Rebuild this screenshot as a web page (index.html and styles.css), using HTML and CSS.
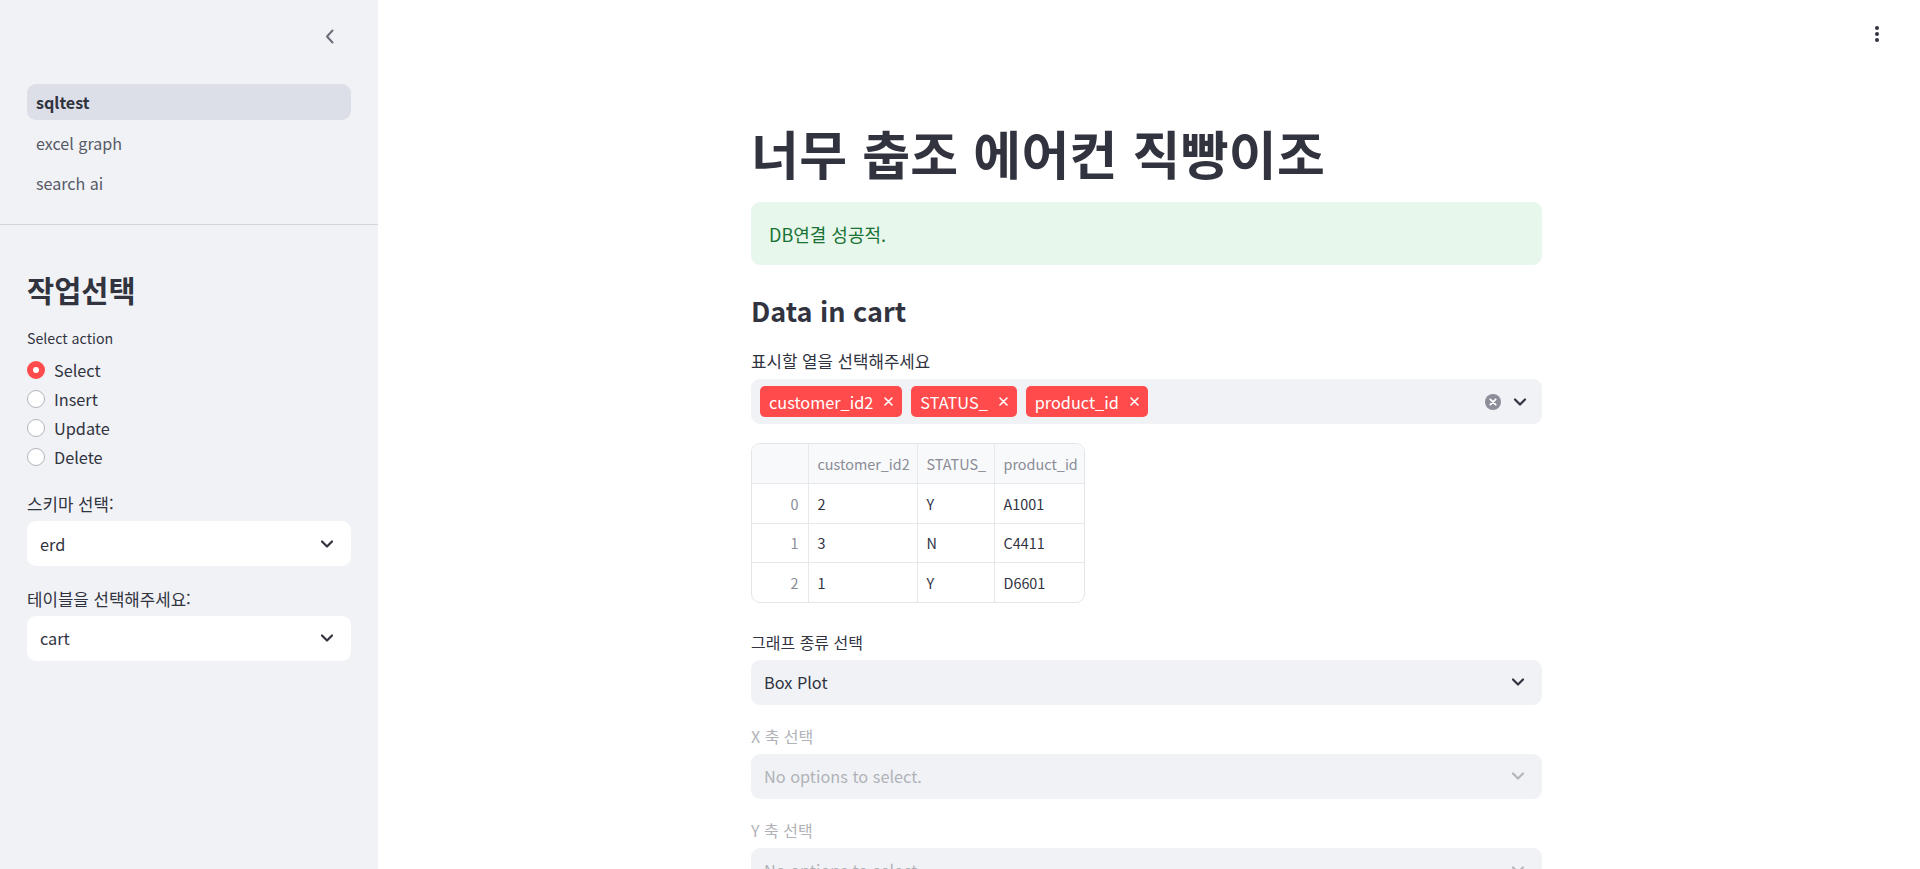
FILE: index.html
```html
<!DOCTYPE html>
<html lang="ko">
<head>
<meta charset="utf-8">
<title>sqltest</title>
<link rel="stylesheet" href="styles.css">
</head>
<body>
<div class="app">
  <aside class="sidebar">
    <div class="sb-top">
      <button class="collapse" aria-label="collapse">
        <svg width="10" height="15" viewBox="0 0 10 15"><path d="M7.5 1.5 L2 7.5 L7.5 13.5" fill="none" stroke="#6b6e79" stroke-width="2" stroke-linecap="round" stroke-linejoin="round"/></svg>
      </button>
    </div>
    <nav class="nav">
      <a class="nav-item active">sqltest</a>
      <a class="nav-item">excel graph</a>
      <a class="nav-item">search ai</a>
    </nav>
    <div class="sb-divider"></div>
    <div class="sb-content">
      <h2 class="sb-heading">작업선택</h2>
      <div class="label latin sb-label-action">Select action</div>
      <div class="radios">
        <div class="radio"><span class="dot checked"></span><span>Select</span></div>
        <div class="radio"><span class="dot"></span><span>Insert</span></div>
        <div class="radio"><span class="dot"></span><span>Update</span></div>
        <div class="radio"><span class="dot"></span><span>Delete</span></div>
      </div>
      <div class="label ko sb-label">스키마 선택:</div>
      <div class="select white sb-select"><span>erd</span>
        <svg class="chev" width="14" height="10" viewBox="0 0 14 10"><path d="M2 2.5 L7 7.5 L12 2.5" fill="none" stroke="#31333f" stroke-width="2.2" stroke-linecap="round" stroke-linejoin="round"/></svg>
      </div>
      <div class="label ko sb-label">테이블을 선택해주세요:</div>
      <div class="select white sb-select"><span>cart</span>
        <svg class="chev" width="14" height="10" viewBox="0 0 14 10"><path d="M2 2.5 L7 7.5 L12 2.5" fill="none" stroke="#31333f" stroke-width="2.2" stroke-linecap="round" stroke-linejoin="round"/></svg>
      </div>
    </div>
  </aside>

  <main class="main">
    <button class="menu" aria-label="menu">
      <svg width="6" height="18" viewBox="0 0 6 18"><circle cx="3" cy="3" r="2" fill="#31333f"/><circle cx="3" cy="9" r="2" fill="#31333f"/><circle cx="3" cy="15" r="2" fill="#31333f"/></svg>
    </button>
    <div class="block">
      <h1 class="title">너무 춥조 에어컨 직빵이조</h1>
      <div class="success">DB연결 성공적.</div>
      <h3 class="subhead">Data in cart</h3>
      <div class="label ko m-label">표시할 열을 선택해주세요</div>
      <div class="multi">
        <div class="tags">
          <span class="tag">customer_id2<svg class="x" width="9" height="9" viewBox="0 0 9 9"><path d="M1 1 L8 8 M8 1 L1 8" stroke="#fff" stroke-width="1.6" stroke-linecap="round"/></svg></span>
          <span class="tag">STATUS_<svg class="x" width="9" height="9" viewBox="0 0 9 9"><path d="M1 1 L8 8 M8 1 L1 8" stroke="#fff" stroke-width="1.6" stroke-linecap="round"/></svg></span>
          <span class="tag">product_id<svg class="x" width="9" height="9" viewBox="0 0 9 9"><path d="M1 1 L8 8 M8 1 L1 8" stroke="#fff" stroke-width="1.6" stroke-linecap="round"/></svg></span>
        </div>
        <div class="multi-icons">
          <svg width="18" height="18" viewBox="0 0 18 18"><circle cx="9" cy="9" r="8" fill="#8b8d98"/><path d="M6.3 6.3 L11.7 11.7 M11.7 6.3 L6.3 11.7" stroke="#fff" stroke-width="1.8" stroke-linecap="round"/></svg>
          <svg width="14" height="10" viewBox="0 0 14 10"><path d="M2 2.5 L7 7.5 L12 2.5" fill="none" stroke="#31333f" stroke-width="2.2" stroke-linecap="round" stroke-linejoin="round"/></svg>
        </div>
      </div>
      <div class="table-wrap">
        <table class="df">
          <colgroup><col class="w-idx"><col class="w-c1"><col class="w-c2"><col class="w-c3"></colgroup>
          <thead>
            <tr><th class="idx"></th><th>customer_id2</th><th>STATUS_</th><th>product_id</th></tr>
          </thead>
          <tbody>
            <tr><td class="idx">0</td><td>2</td><td>Y</td><td>A1001</td></tr>
            <tr><td class="idx">1</td><td>3</td><td>N</td><td>C4411</td></tr>
            <tr><td class="idx">2</td><td>1</td><td>Y</td><td>D6601</td></tr>
          </tbody>
        </table>
      </div>
      <div class="label g-label">그래프 종류 선택</div>
      <div class="select grey"><span>Box Plot</span>
        <svg class="chev" width="14" height="10" viewBox="0 0 14 10"><path d="M2 2.5 L7 7.5 L12 2.5" fill="none" stroke="#31333f" stroke-width="2.2" stroke-linecap="round" stroke-linejoin="round"/></svg>
      </div>
      <div class="label disabled-label">X 축 선택</div>
      <div class="select grey disabled"><span>No options to select.</span>
        <svg class="chev" width="14" height="10" viewBox="0 0 14 10"><path d="M2 2.5 L7 7.5 L12 2.5" fill="none" stroke="#b4b5bb" stroke-width="2.2" stroke-linecap="round" stroke-linejoin="round"/></svg>
      </div>
      <div class="label disabled-label">Y 축 선택</div>
      <div class="select grey disabled"><span>No options to select.</span>
        <svg class="chev" width="14" height="10" viewBox="0 0 14 10"><path d="M2 2.5 L7 7.5 L12 2.5" fill="none" stroke="#b4b5bb" stroke-width="2.2" stroke-linecap="round" stroke-linejoin="round"/></svg>
      </div>
    </div>
  </main>
</div>
</body>
</html>
```
FILE: styles.css
```css
* { box-sizing: border-box; }
html, body { margin: 0; padding: 0; height: 100%; overflow: hidden; }
body {
  font-family: "Noto Sans CJK KR", "Noto Sans", sans-serif;
  color: #31333f;
  background: #fff;
  font-size: 16.3px;
}
.app { display: flex; height: 869px; }

/* sidebar */
.sidebar {
  width: 378px;
  flex: 0 0 378px;
  background: #f0f2f6;
  display: flex;
  flex-direction: column;
}
.sb-top {
  height: 84px;
  display: flex;
  justify-content: flex-end;
  padding: 29px 43px 0 0;
}
.collapse {
  border: 0; background: none; padding: 0;
  width: 10px; height: 15px;
  display: flex;
}
.nav {
  padding: 0 27px 23px;
  display: flex;
  flex-direction: column;
  gap: 4.5px;
}
.nav-item {
  height: 36px;
  line-height: 36px;
  padding: 0 9px;
  border-radius: 9px;
  font-size: 16.1px;
  color: #575a66;
}
.nav-item.active {
  background: #dcdfe7;
  color: #31333f;
  font-weight: 600;
}
.sb-divider { height: 1px; background: #d3d5db; }
.sb-content { padding: 44px 27px 0; display: flex; flex-direction: column; }
.sb-heading {
  margin: 0;
  font-size: 29.5px;
  line-height: 40px;
  font-weight: 700;
}
.label {
  font-size: 16px;
  line-height: 22px;
  color: #31333f;
  white-space: nowrap;
}
.label.latin { font-size: 14.2px; }
.label.ko { font-size: 16.8px; }
.sb-label-action { margin-top: 18px; }
.radios { margin-top: 6.5px; display: flex; flex-direction: column; }
.radio {
  height: 29px;
  display: flex;
  align-items: center;
  gap: 9px;
  font-size: 16.3px;
}
.dot {
  width: 18px; height: 18px;
  border-radius: 50%;
  background: #fff;
  border: 1px solid #b2b4bb;
  flex: 0 0 18px;
}
.dot.checked {
  border: 6px solid #ff4b4b;
  background: #fff;
}
.sb-label { margin-top: 21.5px; }
.select {
  margin-top: 7px;
  height: 45px;
  border-radius: 9px;
  display: flex;
  align-items: center;
  justify-content: space-between;
  padding: 0 17px 0 13px;
  font-size: 16.3px;
}
.select.sb-select { margin-top: 6px; }
.select.white { background: #fff; }
.select.grey { background: #f0f2f6; }
.select.disabled { color: #b1b2b8; }

/* main */
.main {
  flex: 1;
  position: relative;
  padding-right: 5px;
  overflow: hidden;
}
.menu {
  position: absolute;
  top: 25px;
  right: 40px;
  border: 0; background: none; padding: 0;
  width: 6px; height: 18px;
  display: flex;
}
.block {
  width: 791px;
  margin: 0 auto;
  padding-top: 123px;
  display: flex;
  flex-direction: column;
}
.title {
  margin: 0;
  font-size: 52px;
  line-height: 60px;
  font-weight: 700;
  letter-spacing: 0.3px;
}
.success {
  margin-top: 19px;
  height: 63px;
  border-radius: 9px;
  background: #e7f7ec;
  color: #177233;
  padding: 0 18px;
  display: flex;
  align-items: center;
  font-size: 18px;
}
.subhead {
  margin: 25px 0 0;
  font-size: 27px;
  line-height: 42px;
  font-weight: 600;
}
.m-label { margin-top: 18px; }
.multi {
  margin-top: 7px;
  height: 45px;
  background: #f0f2f6;
  border-radius: 9px;
  display: flex;
  align-items: center;
  justify-content: space-between;
  padding: 0 15px 0 9px;
}
.tags { display: flex; gap: 9px; }
.tag {
  height: 31px;
  background: #ff4b4b;
  color: #fff;
  border-radius: 5px;
  padding: 0 9px;
  display: flex;
  align-items: center;
  font-size: 16.3px;
  gap: 11px;
}
.tag .x { flex: 0 0 9px; }
.multi-icons { display: flex; align-items: center; gap: 11px; }

.table-wrap {
  margin-top: 19px;
  width: 334px;
  border: 1px solid #e4e5e9;
  border-radius: 9px;
  overflow: hidden;
}
.df {
  border-collapse: collapse;
  table-layout: fixed;
  font-size: 14.4px;
  width: 332px;
}
.w-idx { width: 56px; }
.w-c1 { width: 109px; }
.w-c2 { width: 77px; }
.w-c3 { width: 90px; }
.df th, .df td {
  height: 39.5px;
  padding: 0 9px;
  text-align: left;
  font-weight: 400;
  border-right: 1px solid #e7e8eb;
  border-bottom: 1px solid #e7e8eb;
  white-space: nowrap;
  overflow: hidden;
}
.df tr > :last-child { border-right: 0; }
.df tbody tr:last-child td { border-bottom: 0; }
.df th { background: #f8f9fb; color: #8a8c96; }
.df td { color: #31333f; }
.df .idx { text-align: right; color: #8a8c96; }

.g-label { margin-top: 27.5px; }
.disabled-label { margin-top: 20px; color: #b1b2b8; }
```
